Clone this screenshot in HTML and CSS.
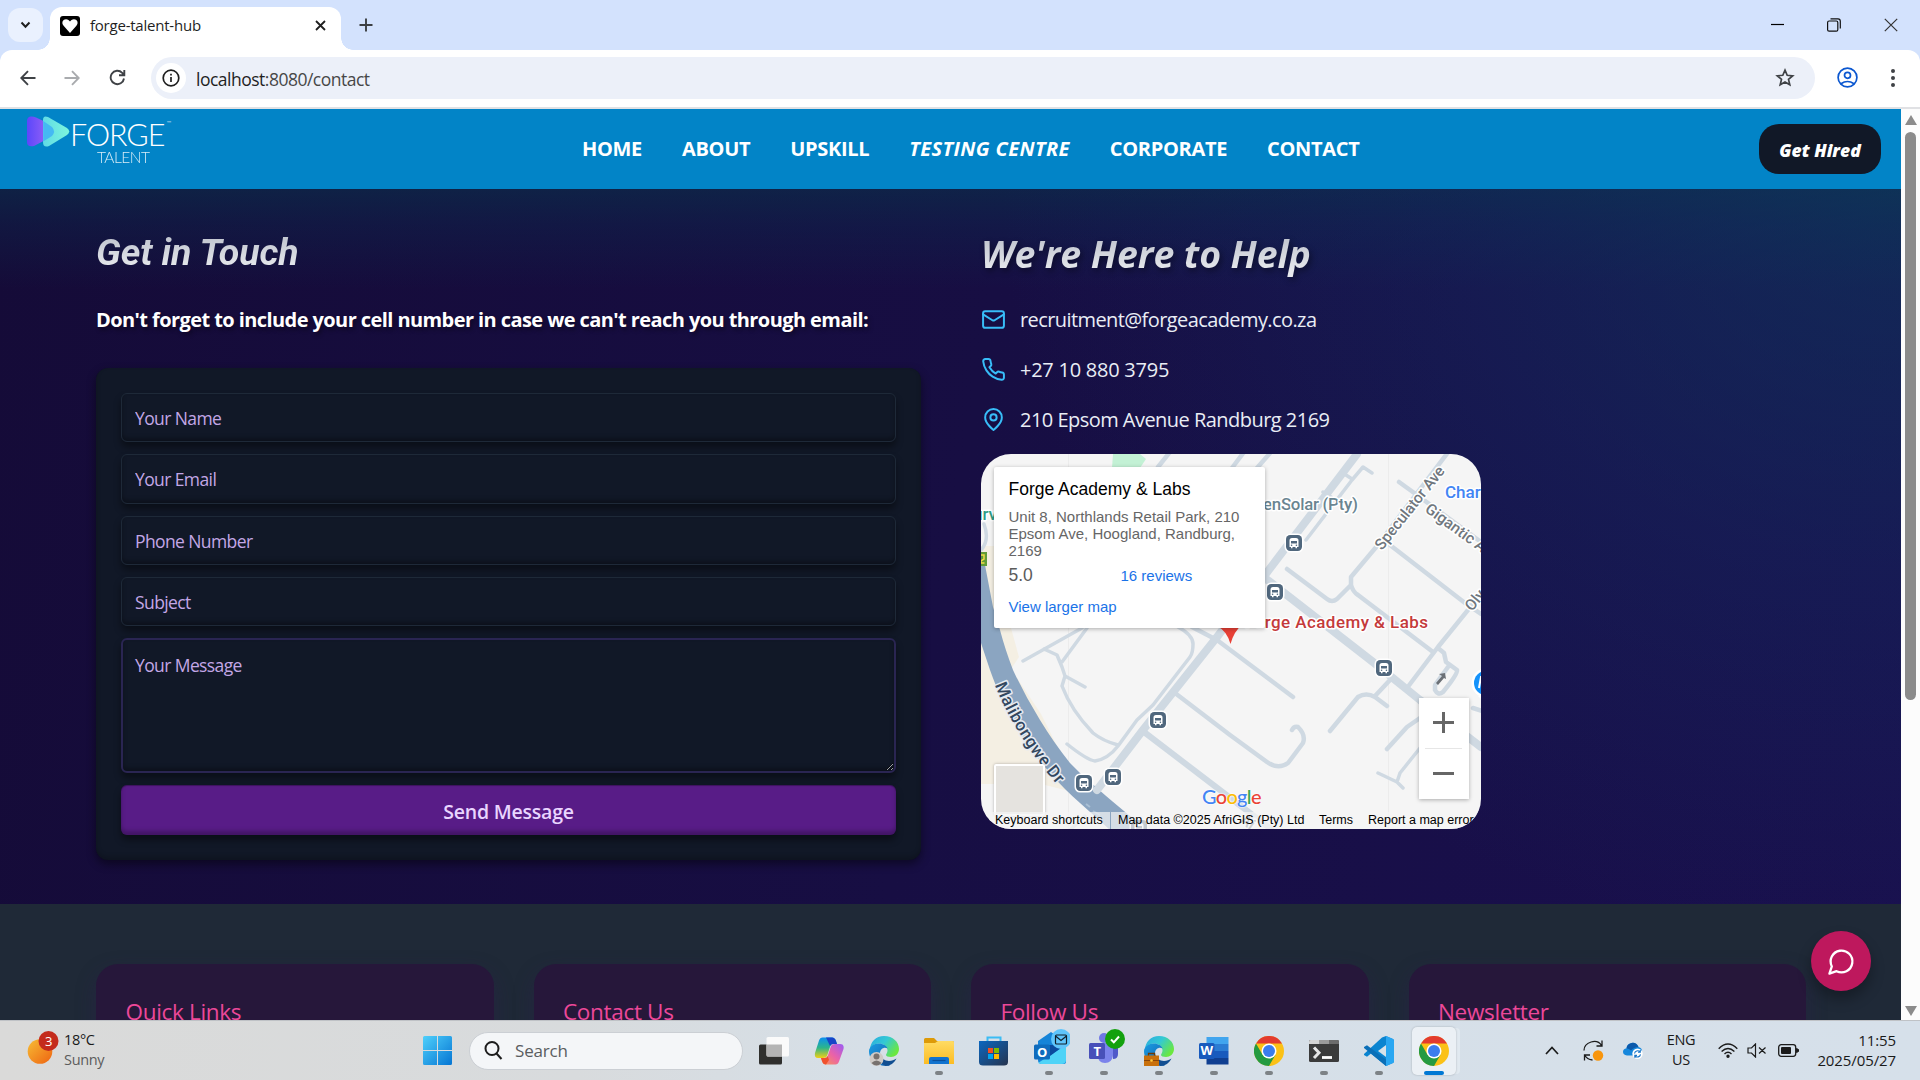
FILE: index.html
```html
<!DOCTYPE html>
<html lang="en">
<head>
<meta charset="utf-8">
<title>forge-talent-hub</title>
<link rel="stylesheet" href="styles.css">
</head>
<body>
<svg class="defs" width="0" height="0" aria-hidden="true">
  <defs>
    <linearGradient id="edgeBlue" x1="0" y1="0" x2="1" y2="1"><stop offset="0" stop-color="#1b9de2"/><stop offset="1" stop-color="#0f5fb0"/></linearGradient>
    <linearGradient id="edgeTeal" x1="0" y1="0" x2="1" y2=".6"><stop offset="0" stop-color="#2aa9e0"/><stop offset=".5" stop-color="#33c9d4"/><stop offset="1" stop-color="#6be83f"/></linearGradient>
    <linearGradient id="winBlue" x1="0" y1="0" x2="1" y2="1"><stop offset="0" stop-color="#4fd0fb"/><stop offset="1" stop-color="#0575d3"/></linearGradient>
    <linearGradient id="sun" x1="0" y1="0" x2="1" y2="1"><stop offset="0" stop-color="#f7bd35"/><stop offset="1" stop-color="#ee6311"/></linearGradient>
    <linearGradient id="cpA" x1="0" y1="0" x2="0" y2="1"><stop offset="0" stop-color="#0b8ff0"/><stop offset=".5" stop-color="#2cb58a"/><stop offset="1" stop-color="#f1d013"/></linearGradient>
    <linearGradient id="cpB" x1="1" y1="0" x2="0" y2="1"><stop offset="0" stop-color="#9a5cf5"/><stop offset=".5" stop-color="#ea62a8"/><stop offset="1" stop-color="#fb9a4e"/></linearGradient>
    <linearGradient id="folder" x1="0" y1="0" x2="0" y2="1"><stop offset="0" stop-color="#ffdb63"/><stop offset="1" stop-color="#fcbc23"/></linearGradient>
    <linearGradient id="store" x1="0" y1="0" x2="1" y2="1"><stop offset="0" stop-color="#0b67c0"/><stop offset="1" stop-color="#26344f"/></linearGradient>
    <linearGradient id="logoA" x1="0" y1="0" x2="1" y2="0"><stop offset="0" stop-color="#5b47fb"/><stop offset="1" stop-color="#8a5cf6"/></linearGradient>
    <linearGradient id="logoB" x1="0" y1="0" x2="1" y2="0"><stop offset="0" stop-color="#5fdbe6"/><stop offset="1" stop-color="#7df5dc"/></linearGradient>
    <symbol id="bus" viewBox="-10 -10 20 20">
      <rect x="-9.5" y="-9.5" width="19" height="19" rx="5.5" fill="#fff"/>
      <rect x="-8" y="-8" width="16" height="16" rx="4.2" fill="#50677d"/>
      <path d="M-4.5 4V-2.5Q-4.5-5-2-5H2Q4.500-5 4.500-2.500V4H3V5.300H1.500V4H-1.500V5.300H-3V4Z" fill="#fff"/>
      <path d="M-3-2H3V.5H-3Z" fill="#50677d"/><circle cx="-2.400" cy="2.200" r=".8" fill="#50677d"/><circle cx="2.400" cy="2.200" r=".8" fill="#50677d"/>
    </symbol>
    <symbol id="edge" viewBox="0 0 30 30">
      <path d="M1 14C1 6 7 0 15 0 24 0 30 6 30 13c0 5-4 8-8 8-3 0-5-1-5-2 0-1 1.500-2 1.500-4.500 0-4-4-7-8-7C5 7.500 2 11 1 14Z" fill="url(#edgeTeal)"/>
      <path d="M0 15c0-4 5-7.500 10-7.500 4 0 8 2.500 8.500 5-3-2-7.500 0-7.500 5 0 6 5 9.500 10 12C14 31 0 28 0 15Z" fill="url(#edgeBlue)"/>
      <path d="M11 17c0 5 5 8 9 8 3 0 5-1 7.500-2.500C25.500 27 21 30 16.500 30 12 28 9.500 23 11 17Z" fill="#114e91"/>
    </symbol>
    <symbol id="chrome" viewBox="0 0 30 30">
      <circle cx="15" cy="15" r="15" fill="#fbc116"/>
      <path d="M2 7.500A15 15 0 0 0 15 30l6.500-11.300L15 15 8.500 18.700Z" fill="#249a41"/>
      <path d="M2 7.500A15 15 0 0 1 28 7.500H15Z" fill="#e33b2e"/>
      <circle cx="15" cy="15" r="7.500" fill="#fff"/><circle cx="15" cy="15" r="6" fill="#3b7ded"/>
    </symbol>
  </defs>
</svg>

<div class="browser">
  <div class="tabstrip">
    <span class="tab-search"><svg width="11" height="8" viewBox="0 0 11 8"><path d="M1.500 1.500 5.500 5.700 9.500 1.500" fill="none" stroke="#1f1f1f" stroke-width="2"/></svg></span>
    <div class="tab">
      <svg width="20" height="20" viewBox="0 0 20 20"><rect width="20" height="20" rx="3" fill="#000"/><path d="M10 17 3.600 9.800C1 6.500 3 3.200 6 3.200c2 0 3.200 1 4 2.300.8-1.300 2-2.300 4-2.300 3 0 5 3.300 2.400 6.600Z" fill="#fff"/></svg>
      <span class="tab-title">forge-talent-hub</span>
      <svg width="11" height="11" viewBox="0 0 11 11"><path d="M1 1 10 10M10 1 1 10" stroke="#1f1f1f" stroke-width="1.800"/></svg>
    </div>
    <svg class="new-tab" width="14" height="14" viewBox="0 0 14 14"><path d="M7 .5V13.500M.5 7H13.500" stroke="#3c3f43" stroke-width="1.900"/></svg>
    <div class="win-controls">
      <svg width="13" height="13" viewBox="0 0 13 13"><path d="M0 5.500H13" stroke="#000" stroke-width="1.200"/></svg>
      <svg width="14" height="14" viewBox="0 0 14 14" fill="none" stroke="#111"><rect x=".6" y="3" width="10.200" height="10.200" rx="1.500" stroke-width="1.200"/><path d="M3.500.8H11Q13.300.8 13.300 3.200V10.500" stroke-width="1.200"/></svg>
      <svg width="14" height="14" viewBox="0 0 14 14"><path d="M.8.8 13.200 13.200M13.200.8.8 13.200" stroke="#333" stroke-width="1.200"/></svg>
    </div>
  </div>
  <div class="toolbar">
    <svg width="16" height="16" viewBox="0 0 16 16" fill="none" stroke="#3f4246" stroke-width="1.900"><path d="M15.500 8H1.500M8 1.200 1.300 8 8 14.800"/></svg>
    <svg width="16" height="16" viewBox="0 0 16 16" fill="none" stroke="#a9abae" stroke-width="1.900"><path d="M.5 8H14.500M8 1.200 14.700 8 8 14.800"/></svg>
    <svg width="17" height="17" viewBox="0 0 17 17" fill="none" stroke="#3f4246" stroke-width="1.900"><path d="M15 9.500A6.700 6.700 0 1 1 13.200 3.800L15 5.800M15.300 1V6.200H10"/></svg>
    <div class="omnibox">
      <span class="site-info"><svg width="18" height="18" viewBox="0 0 18 18" fill="none" stroke="#1f1f1f"><circle cx="9" cy="9" r="7.800" stroke-width="1.700"/><path d="M9 8V13M9 4.800V6.600" stroke-width="1.700"/></svg></span>
      <span class="url"><b>localhost</b>:8080/contact</span>
      <svg class="star" width="20" height="19" viewBox="0 0 20 19"><path d="M10 2.200 12.200 7.300 17.700 7.800 13.500 11.400 14.800 16.800 10 13.900 5.200 16.800 6.500 11.400 2.300 7.800 7.800 7.300Z" fill="none" stroke="#3f4246" stroke-width="1.700"/></svg>
    </div>
    <svg class="profile" width="21" height="21" viewBox="0 0 21 21" fill="none" stroke="#0b57d0" stroke-width="1.700"><circle cx="10.500" cy="10.500" r="9.400"/><circle cx="10.500" cy="8.300" r="3"/><path d="M4 16.800Q10.500 12.200 17 16.800"/></svg>
    <svg width="4" height="18" viewBox="0 0 4 18" fill="#3f4246"><circle cx="2" cy="2" r="2"/><circle cx="2" cy="9" r="2"/><circle cx="2" cy="16" r="2"/></svg>
  </div>

  <div class="viewport">
    <div class="page">
      <header class="site-header">
        <div class="logo">
          <svg width="44" height="31" viewBox="0 0 44 31"><path d="M3.500.5Q6 0 9 1.500L16.500 5V25L7 30Q0 31.500 0 26V5Q0 1 3.500.5Z" fill="url(#logoA)"/><path d="M16 4Q16-1 21 1L40 12Q44.500 15.500 40 19L22 30Q16 32 16 26Z" fill="url(#logoB)"/><path d="M16.200 5 25 11Q29 15.500 25 20L16.200 25.500Z" fill="#45b9f3"/></svg>
          <div class="logo-words"><span class="logo-forge">FORGE<sup>™</sup></span><span class="logo-talent">TALENT</span></div>
        </div>
        <nav class="nav"><a>HOME</a><a>ABOUT</a><a>UPSKILL</a><a class="slanted">TESTING CENTRE</a><a>CORPORATE</a><a>CONTACT</a></nav>
        <a class="hired">Get Hired</a>
      </header>

      <main class="hero">
        <section class="touch">
          <h2 class="h-touch">Get in Touch</h2>
          <p class="note">Don't forget to include your cell number in case we can't reach you through email:</p>
          <form class="form">
            <input placeholder="Your Name">
            <input placeholder="Your Email">
            <input placeholder="Phone Number">
            <input placeholder="Subject">
            <textarea placeholder="Your Message"></textarea>
            <button type="button">Send Message</button>
          </form>
        </section>
        <section class="help">
          <h2 class="h-help">We're Here to Help</h2>
          <ul class="contacts">
            <li><svg width="25" height="25" viewBox="0 0 24 24"><rect x="2" y="4" width="20" height="16" rx="2"/><path d="m22 7-8.970 5.700a1.940 1.940 0 0 1-2.060 0L2 7"/></svg><span>recruitment@forgeacademy.co.za</span></li>
            <li><svg width="25" height="25" viewBox="0 0 24 24"><path d="M22 16.920v3a2 2 0 0 1-2.180 2 19.790 19.790 0 0 1-8.630-3.070 19.500 19.500 0 0 1-6-6 19.790 19.790 0 0 1-3.070-8.670A2 2 0 0 1 4.110 2h3a2 2 0 0 1 2 1.720 12.840 12.840 0 0 0 .7 2.810 2 2 0 0 1-.45 2.110L8.090 9.910a16 16 0 0 0 6 6l1.270-1.270a2 2 0 0 1 2.110-.45 12.840 12.840 0 0 0 2.810.7A2 2 0 0 1 22 16.920z"/></svg><span class="phone">+27 10 880 3795</span></li>
            <li><svg width="25" height="25" viewBox="0 0 24 24"><path d="M20 10c0 6-8 12-8 12s-8-6-8-12a8 8 0 0 1 16 0Z"/><circle cx="12" cy="10" r="3"/></svg><span class="address">210 Epsom Avenue Randburg 2169</span></li>
          </ul>
          <div class="map">
            <svg class="map-canvas" width="500" height="375" viewBox="0 0 500 375">
              <rect width="500" height="375" fill="#f5f5f5"/>
              <path d="M0 92H13V174H30L38 203 30 215 60 260 100 340 60 330H0Z" fill="#f4efe3"/>
              <path d="M132 0H159L165 5 159 14H131Z" fill="#c3f1d5"/>
              <path d="M87.500 0V375M407.500 0V375" stroke="#ececec"/>
              <path d="M0 98 4 111 12 153 19 176Q24 195 32 216 44 242 59 266 73 289 89 309 101 322 116 334 128 345 165 375H128L99 349Q84 336 69 319 54 301 42 283 30 265 22 249 14 230 9 216L0 189Z" fill="#8ba5c1"/>
              <g fill="none" stroke="#cfd9e2" stroke-linecap="round" stroke-linejoin="round">
                <path stroke-width="8" d="M116 336 162 276 236 183 284 121 376 0M284 124 392 208 439 246 500 293"/>
                <path stroke-width="6" d="M163 278 252 346 290 375"/>
                <path stroke-width="4.500" d="M194 239 249 281 286 308Q297 316 307 309L322 289Q325 281 317 273 313 272 311 276M211 173 236 186 312 243M177 13 189-2M251 14 263-2M276 14 290-2M306 115 346 145Q351 149 356 145L370 131V123L396 92 468-3M370 131Q372 138 377 141L452 198M409 91 484 149 500 160M418 28 436 41 500 88M500 140 457 193 426 234M457 194 463 199 465 208 476 216Q477 220 462 238 457 242 454 236V231L467 213M349 277 377 243Q385 238 394 243L406 252M394 242 409 226M406 295 426 273 439 264M492 254 501 257"/>
                <path stroke-width="3.500" d="M197 173Q212 181 212 190 212 199 209 203L172 251 156 266 137 292Q127 305 114 307 106 306 86 290M106 174 81 208M101 174 42 207M63 195 76 201 81 213 84 222 81 232Q90 256 112 279 122 287 137 291M84 222 104 233M391 19 382 13 371 26 325 86M362 19 371 25M342 38 350 43M397 319 416 328 422 334M416 328 419 319 439 294M0 96Q9 86 3 70M90 375 104 362"/>
              </g>
              <path d="M455 229 461 222 458 220 464 219 465 225 463 224 457 231Z" fill="#6b7076"/>
              <path d="M105 350l4 3M112 357l7 4" stroke="#a9bfd4" stroke-width="2"/>
              <g class="lbl">
                <text x="282" y="56" fill="#6a8591" textLength="95">enSolar (Pty)</text>
                <text x="447" y="173.500" fill="#c43a3b" text-anchor="end" textLength="183">Forge Academy &amp; Labs</text>
                <text x="464" y="43.500" fill="#4285f4">Char</text>
                <text x="-8" y="66" fill="#2f9c85">urv</text>
                <text class="road" transform="translate(401 97) rotate(-51.500)" textLength="102">Speculator Ave</text>
                <text class="road" transform="translate(443 57) rotate(36)">Gigantic A</text>
                <text class="road" transform="translate(491 158) rotate(-51)">Oly</text>
                <text class="road" transform="translate(258 368) rotate(36)" fill="#50677d">Ai</text>
                <path id="mali" d="M14 231Q34 282 78 333" fill="none"/>
                <text class="main-road"><textPath href="#mali" textLength="118">Malibongwe Dr</textPath></text>
              </g>
              <rect x="-6" y="98" width="12" height="14" fill="#629c38"/><path d="M0 101H3V105L0 107V109H3.500" stroke="#f3dc48" stroke-width="1.500" fill="none"/>
              <use href="#bus" x="167" y="256" width="20" height="20"/><use href="#bus" x="122" y="313" width="20" height="20"/><use href="#bus" x="93" y="319" width="20" height="20"/><use href="#bus" x="303" y="79" width="20" height="20"/><use href="#bus" x="284" y="128" width="20" height="20"/><use href="#bus" x="393" y="204" width="20" height="20"/><use href="#bus" x="148" y="364" width="20" height="20"/>
              <path d="M236 160V172Q246 177 249.500 190 253 177 262 170V160Z" fill="#e84036"/>
              <path d="M497 242 505 250V238Z" fill="#fff"/><circle cx="505" cy="229" r="14.500" fill="#fff"/><circle cx="505" cy="229" r="12" fill="#1593fb"/><path d="M498 234 500 223 504 223" fill="none" stroke="#fff" stroke-width="2"/>
            </svg>
            <div class="place">
              <div class="place-name">Forge Academy &amp; Labs</div>
              <div class="place-addr">Unit 8, Northlands Retail Park, 210<br>Epsom Ave, Hoogland, Randburg,<br>2169</div>
              <div class="place-rate"><span>5.0</span><a>16 reviews</a></div>
              <a class="place-link">View larger map</a>
            </div>
            <div class="zoomer"><i class="plus"></i><hr><i></i></div>
            <div class="sat"></div>
            <div class="glogo"><span class="b">G</span><span class="r">o</span><span class="y">o</span><span class="b">g</span><span class="g">l</span><span class="r">e</span></div>
            <div class="attr"><span class="a1">Keyboard shortcuts</span><span class="a2">Map data ©2025 AfriGIS (Pty) Ltd</span><span class="a3">Terms</span><span class="a4">Report a map error</span></div>
          </div>
        </section>
      </main>

      <footer class="footer">
        <div class="fcard">Quick Links</div><div class="fcard">Contact Us</div><div class="fcard">Follow Us</div><div class="fcard">Newsletter</div>
      </footer>
      <div class="chat"><svg width="29" height="29" viewBox="0 0 24 24"><path d="M7.900 20A9 9 0 1 0 4 16.100L2 22Z"/></svg></div>
    </div>
    <div class="scrollbar"><i class="up"></i><i class="thumb"></i><i class="down"></i></div>
  </div>
</div>

<div class="taskbar">
  <div class="weather">
    <svg width="34" height="38" viewBox="0 0 34 38"><circle cx="13" cy="22.500" r="12.300" fill="url(#sun)"/><circle cx="21.500" cy="12" r="10" fill="#c42b1c"/><text x="21.500" y="17" text-anchor="middle" fill="#fff" class="badge">3</text></svg>
    <div class="weather-text"><div>18°C</div><div class="dim">Sunny</div></div>
  </div>
  <svg class="start" width="29" height="29" viewBox="0 0 29 29"><path d="M1.500 0H14V14H0V1.500Q0 0 1.500 0ZM15 0H27.500Q29 0 29 1.500V14H15ZM0 15H14V29H1.500Q0 29 0 27.500ZM15 15H29V27.500Q29 29 27.500 29H15Z" fill="url(#winBlue)"/></svg>
  <div class="search"><svg width="19" height="19" viewBox="0 0 19 19" fill="none" stroke="#1d1d1d" stroke-width="2"><circle cx="8" cy="7.500" r="6.500"/><path d="M12.500 12.500 17.500 18"/></svg>Search</div>
  <div class="apps">
    <span class="app"><svg width="30" height="30" viewBox="0 0 30 30"><rect x="0" y="8.500" width="23" height="20" rx="1.500" fill="#2f2f2d"/><rect x="7.500" y="1" width="22.500" height="19.500" rx="1.500" fill="#fafafa"/><path d="M7.500 8.500H23V20.500H9Q7.500 20.500 7.500 19Z" fill="#b4b4b4"/></svg></span>
    <span class="app"><svg width="30" height="30" viewBox="0 0 30 30"><path d="M8.500 1.500H18Q21 1.500 22 5L23 8H19Q17 8 16.300 10L13 20Q12.300 22 9 22H4Q0 22 1 17L5 4.500Q6 1.500 8.500 1.500Z" fill="url(#cpA)"/><path d="M12 1.500H18Q21 1.500 22 5L23 8H19Q17 8 16 10Z" fill="#1744c7"/><path d="M21.500 28.500H12Q9 28.500 8 25L7 22H11Q13 22 13.700 20L17 10Q17.700 8 21 8H26Q30.500 8 29.500 13L25 25.500Q24 28.500 21.500 28.500Z" fill="url(#cpB)"/><path d="M7 22H11Q13 22 13.700 20L15 24 12 28.500Q9 28.500 8 25Z" fill="#f0512e"/></svg></span>
    <span class="app"><svg width="30" height="30" viewBox="0 0 30 30"><use href="#edge" width="30" height="30"/><circle cx="7.500" cy="23" r="7" fill="#cfcac6"/><circle cx="7.500" cy="20.500" r="3" fill="#77716e"/><path d="M2.500 27Q7.500 22 12.500 27 7.500 32 2.500 27Z" fill="#77716e"/></svg></span>
    <span class="app run"><svg width="30" height="30" viewBox="0 0 30 30"><path d="M0 3.500Q0 2 1.500 2H10L13 5H28.500Q30 5 30 6.500V10H0Z" fill="#dd9a08"/><path d="M0 7H11L14 5H28.500Q30 5 30 6.500V28H0Z" fill="url(#folder)"/><path d="M5 28V23Q5 21 7 21H23Q25 21 25 23V28Z" fill="#1173cf"/><path d="M8.500 24.500H21.500" stroke="#0a4f9a" stroke-width="1.200"/></svg></span>
    <span class="app"><svg width="30" height="30" viewBox="0 0 30 30"><path d="M8.500 6V1.500H21.500V6" fill="none" stroke="#3bbcf4" stroke-width="2"/><path d="M0 5H29V26Q29 29.500 25 29.500H4Q0 29.500 0 26Z" fill="url(#store)"/><path fill="#f25022" d="M9 12h5v5H9z"/><path fill="#7fba00" d="M15 12h5v5h-5z"/><path fill="#00a4ef" d="M9 18h5v5H9z"/><path fill="#ffb900" d="M15 18h5v5h-5z"/></svg></span>
    <span class="app run"><svg class="wide" width="38" height="38" viewBox="0 0 38 38"><path d="M6 12 19 3 34 14V33Q34 35 31 35H10Q6 35 6 31Z" fill="#1584d8"/><path d="M6 34 34 16V31Q34 35 30 35H9Z" fill="#4fd3f7"/><path d="M16 16H33L18 27Z" fill="#0b4b9e"/><rect x="2" y="15.500" width="16" height="15" rx="1.500" fill="#0f6cbd"/><text x="10" y="27.500" text-anchor="middle" class="glyph">O</text><circle cx="29" cy="10" r="10" fill="#5fc5fb"/><rect x="23.500" y="6" width="11" height="9" rx="1" fill="none" stroke="#10202c" stroke-width="1.200"/><path d="M23.500 7 29 11.500 34.500 7" fill="none" stroke="#10202c" stroke-width="1.200"/></svg></span>
    <span class="app run"><svg class="wide" width="38" height="38" viewBox="0 0 38 38"><circle cx="17" cy="9" r="5" fill="#6f77e6"/><path d="M24 14H31V25Q31 30 26 30Z" fill="#5059c9"/><path d="M11 14H26V26Q25 34 18 34T11 27Z" fill="#7b83eb"/><rect x="2" y="14" width="16" height="16" rx="1.500" fill="#4850b9"/><text x="10" y="26.500" text-anchor="middle" class="glyph">T</text><circle cx="28" cy="10" r="10" fill="#13a10e"/><path d="M24 10.500 26.800 13.300 32 7.500" fill="none" stroke="#fff" stroke-width="2"/></svg></span>
    <span class="app run"><svg width="30" height="30" viewBox="0 0 30 30"><use href="#edge" width="30" height="30"/><path d="M4.500 20V17.500H10.500V20" fill="none" stroke="#6b3a08" stroke-width="1.300"/><rect y="19.500" width="15" height="10.500" fill="#c8700c"/><path d="M0 24.500H15" stroke="#8a4506"/><circle cx="7.500" cy="24.500" r="1.300" fill="#ffc83d"/></svg></span>
    <span class="app run"><svg width="30" height="30" viewBox="0 0 30 30"><path fill="#41a5ee" d="M7.500 1H29.500V8H7.500z"/><path fill="#2b7cd3" d="M7.500 8H29.500V15H7.500z"/><path fill="#185abd" d="M7.500 15H29.500V22H7.500z"/><path fill="#103f91" d="M7.500 22H29.500V28.500H7.500z"/><rect y="7" width="15.500" height="16" rx="1.500" fill="#185abd"/><text x="7.700" y="19" text-anchor="middle" class="glyph">W</text></svg></span>
    <span class="app run"><svg width="30" height="30"><use href="#chrome" width="30" height="30"/></svg></span>
    <span class="app run"><svg width="30" height="30" viewBox="0 0 30 30"><rect y="4" width="30" height="22" rx="1.500" fill="#3b3b3b"/><path d="M1.500 4H10V8H0V5.500Q0 4 1.500 4Z" fill="#d3d3d3"/><path d="M10 4H20V8H10Z" fill="#9a9a9a"/><path d="M20 4H28.500Q30 4 30 5.500V8H20Z" fill="#6c6c6c"/><path d="M5 11.500 10 16.800 5 22" fill="none" stroke="#e6e6e6" stroke-width="3"/><path d="M13 21.500H23" stroke="#fff" stroke-width="2.800"/></svg></span>
    <span class="app run"><svg width="30" height="30" viewBox="0 0 30 30"><path d="M22 0 29 3Q30 3.500 30 5V25Q30 26.500 29 27L22 30 7 17.500 3 20.700 0 19V18L18 1.500Z" fill="#0a84d0"/><path d="M3 9.200 22 23.500V30L0 12V11Z" fill="#0b6fb8"/><path d="M22 0 29 3Q30 3.500 30 5V25Q30 26.500 29 27L22 30Z" fill="#2aa7f2"/><path d="M22 9 14 15 22 21Z" fill="#d9e2e9"/></svg></span>
    <span class="app active"><svg width="30" height="30"><use href="#chrome" width="30" height="30"/></svg></span>
  </div>
  <div class="tray">
    <svg class="t1" width="14" height="9" viewBox="0 0 14 9"><path d="M1 8 7 1.500 13 8" fill="none" stroke="#1b1b1b" stroke-width="1.700"/></svg>
    <svg class="t2" width="21" height="21" viewBox="0 0 21 21" fill="none" stroke="#1b1b1b" stroke-width="1.300"><path d="M1 10.500C1 2 14 -2 18.500 5.500M19 .5V6H13.500M7 15H1.500V20.500M1.500 15Q4 19.500 9.500 20"/><circle cx="15" cy="15.500" r="5.200" fill="#f8950d" stroke="none"/></svg>
    <svg class="t3" width="20" height="17" viewBox="0 0 20 17"><path d="M4 13.500Q0 13 0 9.800 0 6.800 3.500 6.300 4 2 8.500 1 13 0 15.500 5 19.500 6 19 10 L17 13.500Z" fill="#1687dc"/><path d="M3.500 6.300Q4 2 8.500 1 13 0 15.500 5 11 5 8 8.500 6 6.500 3.500 6.300Z" fill="#0b59ab"/><circle cx="14.500" cy="11.800" r="5.200" fill="#fff"/><path d="M11.500 11.500A3.200 3.200 0 0 1 17 9.800M17.500 12.300A3.200 3.200 0 0 1 12 14M17.300 8V10.300H15M11.800 15.700V13.400H14" fill="none" stroke="#1976c9" stroke-width="1.100"/></svg>
    <div class="lang"><div>ENG</div><div>US</div></div>
    <svg class="t4" width="20" height="15" viewBox="0 0 20 15" fill="none" stroke="#1b1b1b" stroke-width="1.400"><path d="M.7 5.700Q10-3.500 19.300 5.700M3.600 8.500Q10 2.300 16.400 8.500M6.500 11Q10 7.700 13.500 11"/><circle cx="10" cy="13.200" r="1" fill="#1b1b1b"/></svg>
    <svg class="t5" width="20" height="15" viewBox="0 0 20 15" fill="none" stroke="#1b1b1b" stroke-width="1.200"><path d="M1 5H4.500L8.500 1V14L4.500 10H1ZM12 4.500 18.500 10.500M18.500 4.500 12 10.500"/></svg>
    <svg class="t6" width="21" height="13" viewBox="0 0 21 13"><rect x=".7" y=".7" width="17" height="11.600" rx="2.500" fill="none" stroke="#1b1b1b" stroke-width="1.300"/><rect x="3" y="3" width="10" height="7" rx="1" fill="#1b1b1b"/><path d="M18.500 4.500 20.500 5.500V7.500L18.500 8.500Z" fill="#1b1b1b" stroke="#1b1b1b"/></svg>
    <div class="clock"><div>11:55</div><div class="date">2025/05/27</div></div>
  </div>
</div>
</body>
</html>
```
FILE: styles.css
```css
* { box-sizing: border-box; margin: 0; padding: 0; }
body { width: 1920px; height: 1080px; overflow: hidden; display: flex; flex-direction: column; font-family: "Open Sans", "Noto Sans", sans-serif; letter-spacing: -0.02em; }
.defs { position: absolute; }
svg { flex: none; display: block; }

.browser { height: 1020px; display: flex; flex-direction: column; background: #d3e2fd; }
.tabstrip { height: 50px; display: flex; align-items: center; padding-left: 8px; }
.tab-search { width: 35px; height: 34px; border-radius: 12px; background: #eaf1fe; display: grid; place-items: center; margin-right: 7px; }
.tab { position: relative; align-self: flex-end; width: 291px; height: 43px; border-radius: 12px 12px 0 0; background: #fff; display: flex; align-items: center; padding: 0 15px 6px 10px; margin-top: 7px; }
.tab::before, .tab::after { content: ""; position: absolute; bottom: 0; width: 12px; height: 12px; }
.tab::before { left: -12px; background: radial-gradient(circle at 0 0, transparent 11.5px, #fff 12px); }
.tab::after { right: -12px; background: radial-gradient(circle at 100% 0, transparent 11.5px, #fff 12px); }
.tab-title { font-size: 15px; color: #1f1f1f; margin-left: 10px; padding-bottom: 2px; flex: 1; line-height: 34px; letter-spacing: -0.015em; }
.new-tab { margin-left: 18px; }
.win-controls { margin-left: auto; padding-right: 22px; display: flex; gap: 43px; align-items: center; }

.toolbar { height: 59px; background: #fff; border-bottom: 2px solid #e0e1e4; border-radius: 12px 12px 0 0; display: flex; align-items: center; padding: 0 25px 2px 20px; }
.toolbar > svg:nth-child(2) { margin-left: 28px; }
.toolbar > svg:nth-child(3) { margin-left: 29px; }
.omnibox { margin-left: 25px; width: 1664px; height: 42px; border-radius: 21px; background: #ecf0f9; display: flex; align-items: center; padding: 0 20px 0 5px; }
.site-info { width: 30px; height: 30px; border-radius: 50%; background: #fff; display: grid; place-items: center; }
.url { flex: 1; margin-left: 10px; padding-top: 2px; font-size: 17.5px; color: #474747; letter-spacing: -0.5px; }
.url b { font-weight: 400; color: #1f1f1f; }
.profile { margin-left: 22px; margin-right: 33px; }

.viewport { flex: 1; min-height: 0; display: flex; }
.page { position: relative; width: 1901px; height: 911px; overflow: hidden; display: flex; flex-direction: column; }
.scrollbar { width: 19px; background: #fcfcfc; display: flex; flex-direction: column; align-items: center; padding: 6px 0 4px; }
.up, .down { border: 6.5px solid transparent; }
.up { border-top: 0; border-bottom: 10px solid #8b8b8b; }
.down { border-bottom: 0; border-top: 10px solid #8b8b8b; margin-top: auto; }
.thumb { width: 11px; height: 568px; margin-top: 7px; border-radius: 6px; background: #8b8b8b; }

.site-header { height: 80px; flex: none; background: #0284c7; display: flex; justify-content: space-between; padding: 0 20px 0 27px; }
.logo { display: flex; width: 555px; padding-top: 7px; }
.logo-words { color: #fff; font-family: Lato, sans-serif; font-weight: 300; width: 110px; margin-left: -1px; }
.logo-forge { display: block; position: relative; font-size: 30.5px; line-height: 31px; padding-top: 3px; letter-spacing: -0.035em; }
.logo-forge sup { position: absolute; left: 97px; top: 0; font-size: 6px; line-height: 14px; }
.logo-talent { display: block; font-size: 15.5px; line-height: 16px; padding-left: 27px; letter-spacing: -0.035em; margin-top: -1px; opacity: .85; }
.nav { flex: 1; display: flex; gap: 40px; font-weight: 700; font-size: 20px; color: #fff; line-height: 80px; }
.nav a { white-space: nowrap; }
.nav .slanted { font-style: italic; letter-spacing: 0.4px; }
.hired { width: 122px; height: 50px; margin-top: 15px; border-radius: 20px; background: #111827; color: #fff; font-size: 17.5px; font-weight: 800; font-style: italic; text-align: center; line-height: 52px; letter-spacing: 0; }

.hero { height: 715px; flex: none; display: flex; padding: 0 96px; color: #fff;
  background:
    radial-gradient(ellipse 900px 760px at 100% 0, rgba(13,60,95,.6), rgba(18,50,100,.32) 50%, transparent),
    linear-gradient(180deg, rgba(11,45,75,.65), rgba(11,45,80,.35) 35px, transparent 100px),
    linear-gradient(100deg, #150b38, #170e43 50%, #19104e); }
.touch { width: 825px; }
.help { margin-left: 60px; width: 760px; }
h2 { font-size: 37.5px; font-style: italic; font-weight: 700; background: linear-gradient(#c4c8d2 25%, #e8eaee 85%); -webkit-background-clip: text; background-clip: text; color: transparent; width: max-content; padding-right: 10px; white-space: nowrap; }
.h-touch { font-family: Roboto, sans-serif; line-height: 50px; margin-top: 38px; letter-spacing: -0.1px; }
.h-help { line-height: 50px; margin-top: 40px; letter-spacing: -0.1px; filter: drop-shadow(2px 3px 3px rgba(0,0,0,.4)); }
.note { font-size: 20px; font-weight: 700; line-height: 30px; margin-top: 28px; white-space: nowrap; letter-spacing: -0.58px; text-shadow: 2px 3px 4px rgba(0,0,0,.4); }
.form { margin-top: 33px; height: 492px; padding: 25px; border-radius: 12px; background: #111827; display: flex; flex-direction: column; gap: 12px; box-shadow: 0 4px 10px rgba(0,0,0,.45), inset 0 -3px 5px rgba(0,0,0,.2); }
.form input, .form textarea { width: 100%; height: 49.6px; border: 1.5px solid #1e2938; border-radius: 6px; background: #111827; padding: 1px 13px 0; font: 17.5px "Open Sans", sans-serif; letter-spacing: -0.6px; color: #c8a9ec; outline: 0; box-shadow: 0 5px 7px rgba(0,0,0,.4), inset 0 -3px 4px rgba(0,0,0,.3); }
.form ::placeholder { color: #c3a7e6; opacity: 1; }
.form textarea { height: 136px; border: 2px solid #2a2552; padding: 13px 12px; }
.form button { height: 50px; border: 0; border-radius: 6px; padding-top: 2px; background: #581c87; color: #e9d5ff; font: 600 19.5px "Open Sans", sans-serif; letter-spacing: -0.2px; box-shadow: 0 5px 7px rgba(0,0,0,.4), inset 0 -4px 4px rgba(0,0,0,.25), inset 0 1px 1px rgba(0,0,0,.3); }
.contacts { list-style: none; margin-top: 15px; }
.contacts li { height: 50px; display: flex; align-items: center; gap: 14px; font-size: 20px; color: #e9edf5; white-space: nowrap; letter-spacing: -0.59px; }
.contacts .phone { letter-spacing: -0.25px; }
.contacts .address { letter-spacing: -0.53px; }
.contacts svg { fill: none; stroke: #38bdf8; stroke-width: 1.9; stroke-linecap: round; stroke-linejoin: round; }

.map { position: relative; width: 500px; height: 375px; margin-top: 10px; border-radius: 30px; overflow: hidden; font-family: "Liberation Sans", Arial, sans-serif; letter-spacing: 0; }
.lbl { font: 500 17px Roboto, sans-serif; paint-order: stroke; stroke: #fff; stroke-width: 3px; stroke-linejoin: round; }
#mali { stroke: none; }
.road { font-size: 15.5px; fill: #70777e; }
.main-road { font-size: 17px; font-weight: 500; fill: #33475f; stroke: #e6ebf1; }
.place { position: absolute; left: 13px; top: 13px; width: 271px; height: 161px; background: #fff; border-radius: 2px; box-shadow: 0 1px 4px rgba(0,0,0,.3); padding: 11px 14.5px; }
.place-name { font-size: 17.5px; line-height: 22px; color: #000; }
.place-addr { font-size: 15px; line-height: 17px; color: #666; margin-top: 8px; white-space: nowrap; }
.place-rate { display: flex; align-items: baseline; line-height: 22px; margin-top: 5px; font-size: 17.5px; color: #5b5b5b; }
.place-rate span { width: 112px; }
.place a { color: #1a73e8; font-size: 15px; }
.place-link { display: block; line-height: 20px; margin-top: 10px; }
.zoomer { position: absolute; left: 438px; top: 244px; width: 50px; height: 101px; background: #fff; box-shadow: 0 1px 4px rgba(0,0,0,.3); display: flex; flex-direction: column; align-items: center; justify-content: space-between; padding: 23px 7px 24px 6px; }
.zoomer hr { width: 37px; border: 0; border-top: 1px solid #e6e6e6; }
.zoomer i { position: relative; width: 21px; height: 3px; background: #666; }
.plus::after { content: ""; position: absolute; left: 9px; top: -9px; width: 3px; height: 21px; background: #666; }
.sat { position: absolute; left: 13px; top: 310px; width: 51px; height: 52px; border: 2px solid #fff; border-radius: 2px; background: #e5e3df; box-shadow: 0 0 3px rgba(0,0,0,.3); }
.glogo { position: absolute; left: 221px; top: 329px; font: 500 20px/26px Lato, sans-serif; text-shadow: 0 0 2px #fff, 0 0 2px #fff; letter-spacing: -0.7px; }
.b { color: #4285f4; } .r { color: #ea4335; } .y { color: #fbbc05; } .g { color: #34a853; }
.attr { position: absolute; left: 8px; right: 0; top: 358px; height: 17px; background: rgba(245,245,245,.7); display: flex; font-size: 12.5px; line-height: 16px; color: #000; white-space: nowrap; padding-left: 6px; }
.a1 { width: 116px; border-right: 1px solid #8ba5c1; margin-right: 7px; }
.a2 { width: 201px; } .a3 { width: 49px; }

.footer { flex: 1; background: #1f2937; display: grid; grid-template-columns: repeat(4, 1fr); gap: 40px; padding: 60px 95px 0 96px; }
.fcard { height: 200px; border-radius: 22px; background: #26173a; box-shadow: 0 8px 20px rgba(50,30,90,.35); padding: 30px 29.5px; font-size: 22.5px; line-height: 36px; color: #ec4899; font-weight: 500; }
.chat { position: absolute; left: 1811px; top: 822px; width: 60px; height: 60px; border-radius: 50%; background: #be185d; box-shadow: 0 8px 14px rgba(0,0,0,.3); display: grid; place-items: center; }
.chat svg { fill: none; stroke: #fff; stroke-width: 1.9; stroke-linecap: round; stroke-linejoin: round; }

.taskbar { height: 60px; border-top: 1px solid #bfc2c6; background: linear-gradient(90deg, #dadad9, #d8dbdd 30%, #d6dfe7 45%, #d6e0ea); display: flex; align-items: center; font-size: 14.5px; line-height: 20px; color: #1a1a1a; }
.weather { width: 423px; padding-left: 27px; display: flex; gap: 3px; align-items: center; }
.weather svg { margin-top: -6px; }
.weather-text { margin-top: -2px; }
.dim { color: #5c5c5c; }
.badge { font-size: 13px; }
.search { width: 274px; height: 38px; margin-left: 17px; border-radius: 19px; background: #f4f6f8; border: 1px solid #cbcfd4; display: flex; align-items: center; gap: 12px; padding-left: 14px; font-size: 17px; color: #5a5d60; letter-spacing: -0.01em; }
.apps { display: flex; align-items: center; margin-left: 8px; gap: 7px; }
.app { position: relative; width: 48px; height: 48px; display: grid; place-items: center; }
.app:first-child { margin-left: -1px; }
.app .wide { margin: -6px -3px 0 0; }
.run::after, .active::after { content: ""; position: absolute; bottom: 0; left: 20px; width: 8px; height: 4px; border-radius: 2px; background: #7d8286; }
.active { width: 44px; margin-left: 2px; background: #ebf0f5; border-radius: 5px; box-shadow: 0 0 2px rgba(0,0,0,.25), 5px 0 0 -1px #e1e9f0; }
.active::after { left: 12px; width: 20px; background: #0078d4; }
.glyph { font: 700 13px "Open Sans", sans-serif; fill: #fff; }
.tray { margin-left: auto; margin-right: 24px; display: flex; align-items: center; }
.t1 { margin-right: 1px; }
.t2 { margin-left: 23px; } .t3 { margin-left: 19px; }
.lang { width: 40px; margin-left: 18px; text-align: center; margin-top: -1px; }
.t4 { margin-left: 17px; } .t5 { margin-left: 9px; } .t6 { margin-left: 11px; }
.clock { width: 97px; text-align: right; font-size: 15px; letter-spacing: -0.1px; margin-top: -2px; }
```
